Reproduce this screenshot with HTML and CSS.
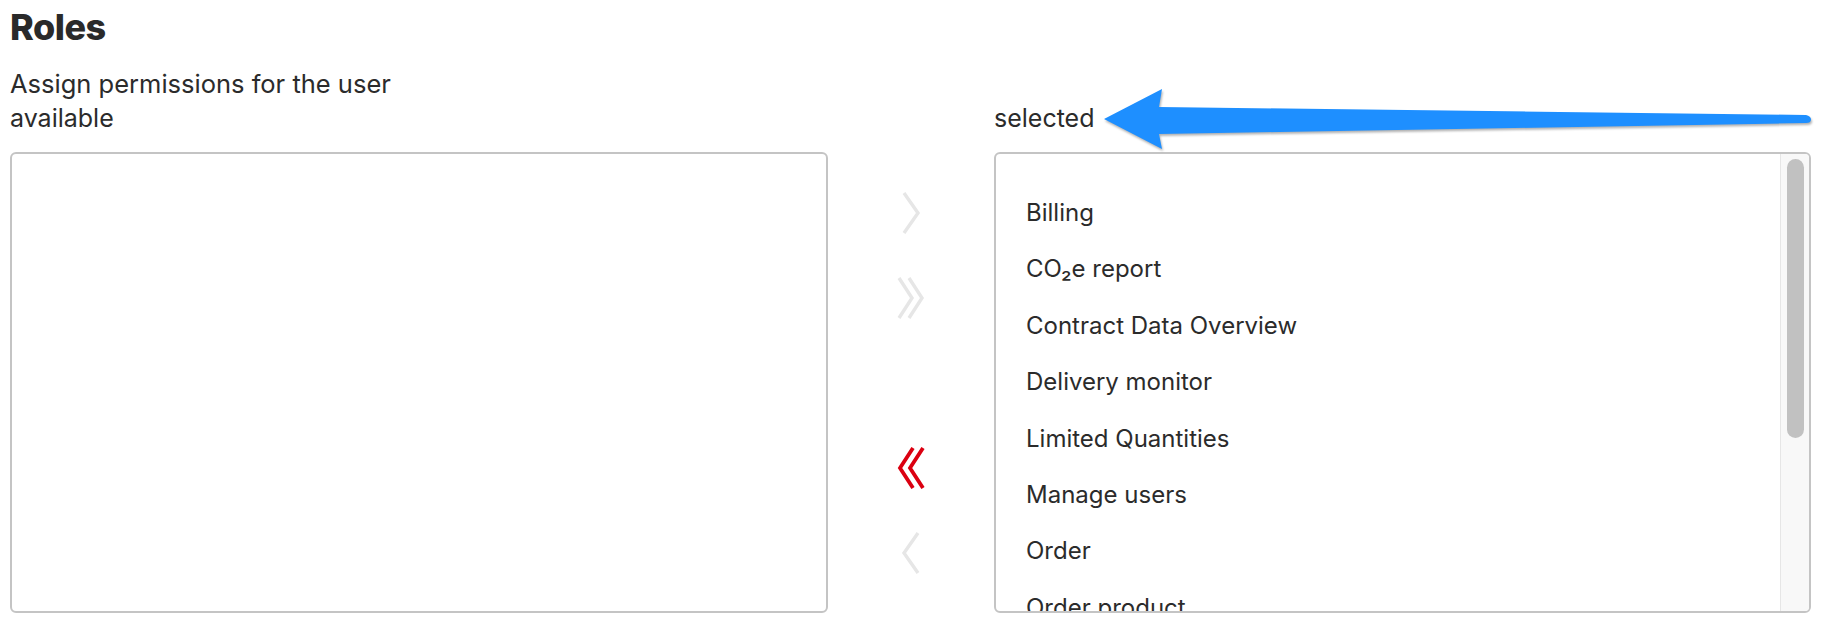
FILE: index.html
```html
<!DOCTYPE html>
<html lang="en">
<head>
<meta charset="utf-8">
<title>Roles</title>
<link rel="stylesheet" href="styles.css">
</head>
<body>
<main class="page">
  <h1 class="title">Roles</h1>
  <p class="intro">Assign permissions for the user</p>
  <div class="picker">
    <div class="label">available</div>
    <div></div>
    <div class="label label-selected">
      selected
      <svg class="callout" width="720" height="70" viewBox="0 0 720 70" aria-hidden="true">
        <path d="M2,33 L60,3 L57,21 L704,29 Q709,30 709,33.5 Q709,37 704,37 L57,48 L60,63 Z" fill="#1e8fff"/>
      </svg>
    </div>

    <div class="listbox" role="listbox" aria-label="available"></div>

    <div class="controls">
      <button class="move" type="button" aria-label="Add selected" disabled>
        <svg width="20" height="42" viewBox="0 0 20 42"><polyline points="3,1 17,21 3,41" fill="none" stroke="currentColor" stroke-width="3.4"/></svg>
      </button>
      <button class="move gap-after" type="button" aria-label="Add all" disabled>
        <svg width="28" height="42" viewBox="0 0 28 42"><polyline points="2,1 15,21 2,41" fill="none" stroke="currentColor" stroke-width="3.4"/><polyline points="12,1 25,21 12,41" fill="none" stroke="currentColor" stroke-width="3.4"/></svg>
      </button>
      <button class="move active" type="button" aria-label="Remove all">
        <svg width="28" height="42" viewBox="0 0 28 42"><polyline points="16,1 3,21 16,41" fill="none" stroke="currentColor" stroke-width="3.8"/><polyline points="26,1 13,21 26,41" fill="none" stroke="currentColor" stroke-width="3.8"/></svg>
      </button>
      <button class="move" type="button" aria-label="Remove selected" disabled>
        <svg width="20" height="42" viewBox="0 0 20 42"><polyline points="17,1 3,21 17,41" fill="none" stroke="currentColor" stroke-width="3.4"/></svg>
      </button>
    </div>

    <div class="listbox selected-box">
      <ul class="options" role="listbox" aria-label="selected">
        <li class="option">Billing</li>
        <li class="option">CO₂e report</li>
        <li class="option">Contract Data Overview</li>
        <li class="option">Delivery monitor</li>
        <li class="option">Limited Quantities</li>
        <li class="option">Manage users</li>
        <li class="option">Order</li>
        <li class="option">Order product</li>
      </ul>
      <div class="scrollbar" aria-hidden="true">
        <div class="thumb"></div>
      </div>
    </div>
  </div>
</main>
</body>
</html>
```
FILE: styles.css
```css
* { box-sizing: border-box; }

html, body {
  margin: 0;
  padding: 0;
  background: #ffffff;
}

body {
  font-family: Inter, "Noto Sans", "Liberation Sans", sans-serif;
  color: #2b2b2b;
}

.page {
  padding: 6px 17px 0 10px;
}

.title {
  margin: 0;
  font-size: 36px;
  line-height: 42px;
  font-weight: 800;
  letter-spacing: -0.5px;
  color: #2a2a2a;
}

.intro {
  margin: 18px 0 0;
  font-size: 25.5px;
  line-height: 35px;
}

.picker {
  display: grid;
  grid-template-columns: 818px 166px 1fr;
  row-gap: 16px;
}

.label {
  font-size: 25px;
  line-height: 35px;
}

.label-selected {
  position: relative;
}

.callout {
  position: absolute;
  left: 108px;
  top: -15px;
  filter: drop-shadow(1px 2px 1px rgba(0, 0, 0, 0.3));
  pointer-events: none;
}

.listbox {
  height: 461px;
  margin: 0;
  border: 2px solid #c4c4c4;
  border-radius: 6px;
  background: #fff;
}

.selected-box {
  display: flex;
  overflow: hidden;
}

.options {
  flex: 1;
  margin: 0;
  padding: 31px 0 0 30px;
  list-style: none;
  overflow: hidden;
}

.scrollbar {
  flex: 0 0 29px;
  background: #f8f8f8;
  border-left: 1px solid #e6e6e6;
  padding: 5px 5px 0 6px;
}

.thumb {
  height: 279px;
  border-radius: 9px;
  background: #c1c1c1;
}

.option {
  font-size: 24px;
  line-height: 36.4px;
  padding: 10px 0;
  white-space: nowrap;
}

.controls {
  display: flex;
  flex-direction: column;
  justify-content: center;
  align-items: center;
}

.move {
  display: flex;
  align-items: center;
  justify-content: center;
  height: 85px;
  width: 60px;
  padding: 0;
  border: 0;
  background: none;
  color: #e6e6e6;
  cursor: pointer;
}

.move.active {
  color: #db0011;
}

.gap-after {
  margin-bottom: 85px;
}
```
